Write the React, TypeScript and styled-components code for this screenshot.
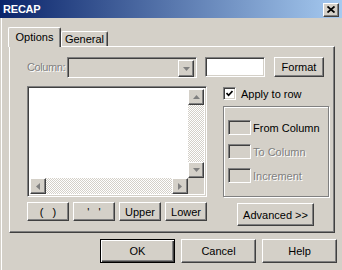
import React from 'react'
import styled, { createGlobalStyle, css } from 'styled-components'

const GlobalStyle = createGlobalStyle`
  * { box-sizing: border-box; }
  body {
    margin: 0;
    background: #d4d0c8;
    font-family: "Liberation Sans", Arial, sans-serif;
    font-size: 11px;
    color: #000;
  }
`

const raised = css`
  border: 1px solid;
  border-color: #fff #404040 #404040 #fff;
  box-shadow: inset -1px -1px #808080, inset 1px 1px #d4d0c8;
`

const sunken = css`
  border: 1px solid;
  border-color: #808080 #fff #fff #808080;
  box-shadow: inset 1px 1px #404040, inset -1px -1px #d4d0c8;
`

const Window = styled.div`
  width: 342px;
  height: 270px;
  background: #d4d0c8;
  display: flex;
  flex-direction: column;
  overflow: hidden;
`

const TitleBar = styled.div`
  height: 18px;
  flex: none;
  display: flex;
  align-items: center;
  justify-content: space-between;
  padding: 0 3px 0 3px;
  background: linear-gradient(to right, #0a246a, #a6caf0);
`

const Title = styled.span`
  color: #fff;
  font-weight: bold;
  font-size: 11px;
  letter-spacing: -0.2px;
`

const CloseButton = styled.div`
  ${raised};
  width: 16px;
  height: 14px;
  background: #d4d0c8;
  display: flex;
  align-items: center;
  justify-content: center;
  margin-top: 1px;
`

const Body = styled.div`
  flex: 1;
  margin-left: 1px;
  border-left: 1px solid #fff;
  padding: 9px 0 0 6px;
  display: flex;
  flex-direction: column;
`

const TabStrip = styled.div`
  display: flex;
  align-items: flex-end;
  height: 19px;
  position: relative;
  z-index: 1;
`

const Tab = styled.div<{ $active?: boolean; $width: number }>`
  width: ${p => p.$width}px;
  height: ${p => (p.$active ? 20 : 15)}px;
  margin-bottom: ${p => (p.$active ? -1 : 0)}px;
  background: #d4d0c8;
  border-top: 1px solid #fff;
  border-left: 1px solid #fff;
  border-right: 1px solid #404040;
  box-shadow: inset -1px 0 #808080;
  border-radius: 2px 2px 0 0;
  display: flex;
  justify-content: center;
  padding-top: ${p => (p.$active ? 3 : 1)}px;
`

const Panel = styled.div`
  margin-left: 1px;
  width: 326px;
  height: 187px;
  border: 1px solid;
  border-color: #fff #404040 #404040 #fff;
  box-shadow: inset -1px -1px #808080;
  padding: 10px 0 0 17px;
  display: flex;
  flex-direction: column;
`

const Row = styled.div`
  display: flex;
  align-items: flex-start;
`

const DisabledLabel = styled.span<{ $width?: number }>`
  color: #808080;
  text-shadow: 1px 1px 0 #fff;
  ${p => (p.$width ? `width: ${p.$width}px;` : '')}
  flex: none;
  line-height: 21px;
  letter-spacing: -0.4px;
  white-space: nowrap;
`

const Combo = styled.div`
  ${sunken};
  width: 130px;
  height: 21px;
  background: #d4d0c8;
  padding: 2px;
  display: flex;
  justify-content: flex-end;
`

const ArrowButton = styled.div<{ $w?: number; $h?: number }>`
  ${raised};
  width: ${p => p.$w ?? 16}px;
  height: ${p => p.$h ?? 16}px;
  flex: none;
  background: #d4d0c8;
  display: flex;
  align-items: center;
  justify-content: center;
`

const TextField = styled.div`
  ${sunken};
  width: 60px;
  height: 20px;
  margin-left: 8px;
  background: #fff;
`

const Button = styled.div<{ $w: number; $h: number; $ml?: number; $mt?: number; $default?: boolean }>`
  ${raised};
  width: ${p => p.$w}px;
  height: ${p => p.$h}px;
  margin-left: ${p => p.$ml ?? 0}px;
  margin-top: ${p => p.$mt ?? 0}px;
  flex: none;
  background: #d4d0c8;
  display: flex;
  align-items: center;
  justify-content: center;
  white-space: pre;
  ${p =>
    p.$default &&
    css`
      border: 1px solid #000;
      box-shadow: inset 1px 1px #fff, inset -1px -1px #404040, inset -2px -2px #808080;
    `}
`

const Columns = styled.div`
  display: flex;
  margin-top: 8px;
`

const LeftCol = styled.div`
  display: flex;
  flex-direction: column;
  width: 180px;
`

const ListBox = styled.div`
  ${sunken};
  width: 180px;
  height: 111px;
  background: #fff;
  padding: 2px;
  display: grid;
  grid-template-columns: 1fr 16px;
  grid-template-rows: 1fr 16px;
`

const VScroll = styled.div`
  grid-column: 2;
  grid-row: 1;
  display: flex;
  flex-direction: column;
`

const HScroll = styled.div`
  grid-column: 1;
  grid-row: 2;
  display: flex;
`

const Track = styled.div`
  flex: 1;
  background-image: repeating-conic-gradient(#fff 0 25%, #d4d0c8 0 50%);
  background-size: 2px 2px;
`

const Corner = styled.div`
  grid-column: 2;
  grid-row: 2;
  background: #d4d0c8;
`

const ButtonRow = styled.div`
  display: flex;
  gap: 4px;
  margin-top: 5px;
`

const RightCol = styled.div`
  display: flex;
  flex-direction: column;
  margin-left: 16px;
`

const CheckRow = styled.div`
  display: flex;
  align-items: center;
  height: 13px;
  margin-top: 1px;
`

const CheckBox = styled.div`
  ${sunken};
  width: 13px;
  height: 13px;
  background: #fff;
  display: flex;
  align-items: center;
  justify-content: center;
`

const CheckText = styled.span`
  margin-left: 5px;
`

const GroupBox = styled.div`
  width: 106px;
  height: 91px;
  margin-top: 6px;
  border: 1px solid #808080;
  box-shadow: inset 1px 1px #fff, 1px 1px #fff;
  padding: 13px 0 0 4px;
  display: flex;
  flex-direction: column;
  gap: 9px;
`

const GroupRow = styled.div`
  display: flex;
  align-items: center;
  height: 15px;
`

const EmptyBox = styled.div`
  ${sunken};
  width: 23px;
  height: 15px;
  background: #d4d0c8;
  flex: none;
`

const GroupLabel = styled.span<{ $disabled?: boolean }>`
  margin-left: 2px;
  white-space: nowrap;
  ${p =>
    p.$disabled &&
    css`
      color: #808080;
      text-shadow: 1px 1px 0 #fff;
    `}
`

const Footer = styled.div`
  display: flex;
  justify-content: flex-end;
  gap: 6px;
  margin-top: 6px;
  padding-right: 5px;
`

type Dir = 'up' | 'down' | 'left' | 'right'

const Arrow = ({ dir }: { dir: Dir }) => {
  const pts: Record<Dir, string> = {
    up: '3.5,0 7,4 0,4',
    down: '0,0 7,0 3.5,4',
    left: '4,0 4,7 0,3.5',
    right: '0,0 0,7 4,3.5',
  }
  const vertical = dir === 'up' || dir === 'down'
  return (
    <svg width={vertical ? 7 : 4} height={vertical ? 4 : 7} viewBox={vertical ? '0 0 7 4' : '0 0 4 7'}>
      <polygon points={pts[dir]} fill="#808080" />
    </svg>
  )
}

export default function App () {
  return (
    <>
      <GlobalStyle />
      <Window>
        <TitleBar>
          <Title>RECAP</Title>
          <CloseButton>
            <svg width="8" height="7" viewBox="0 0 8 7">
              <path d="M0.5 0.5 L7.5 6.5 M7.5 0.5 L0.5 6.5" stroke="#000" strokeWidth="1.8" />
            </svg>
          </CloseButton>
        </TitleBar>
        <Body>
          <TabStrip>
            <Tab $active $width={53}>Options</Tab>
            <Tab $width={47}>General</Tab>
          </TabStrip>
          <Panel>
            <Row>
              <DisabledLabel $width={40}>Column:</DisabledLabel>
              <Combo>
                <ArrowButton $w={16} $h={17}>
                  <Arrow dir="down" />
                </ArrowButton>
              </Combo>
              <TextField />
              <Button $w={50} $h={20} $ml={9}>Format</Button>
            </Row>
            <Columns>
              <LeftCol>
                <ListBox>
                  <div />
                  <VScroll>
                    <ArrowButton><Arrow dir="up" /></ArrowButton>
                    <Track />
                    <ArrowButton><Arrow dir="down" /></ArrowButton>
                  </VScroll>
                  <HScroll>
                    <ArrowButton><Arrow dir="left" /></ArrowButton>
                    <Track />
                    <ArrowButton><Arrow dir="right" /></ArrowButton>
                  </HScroll>
                  <Corner />
                </ListBox>
                <ButtonRow>
                  <Button $w={42} $h={19}>(   )</Button>
                  <Button $w={42} $h={19}>'   '</Button>
                  <Button $w={42} $h={19}>Upper</Button>
                  <Button $w={42} $h={19}>Lower</Button>
                </ButtonRow>
              </LeftCol>
              <RightCol>
                <CheckRow>
                  <CheckBox>
                    <svg width="7" height="7" viewBox="0 0 7 7">
                      <path d="M0.5 3 L2.6 5.3 L6.5 1" stroke="#000" strokeWidth="1.7" fill="none" />
                    </svg>
                  </CheckBox>
                  <CheckText>Apply to row</CheckText>
                </CheckRow>
                <GroupBox>
                  <GroupRow>
                    <EmptyBox />
                    <GroupLabel>From Column</GroupLabel>
                  </GroupRow>
                  <GroupRow>
                    <EmptyBox />
                    <GroupLabel $disabled>To Column</GroupLabel>
                  </GroupRow>
                  <GroupRow>
                    <EmptyBox />
                    <GroupLabel $disabled>Increment</GroupLabel>
                  </GroupRow>
                </GroupBox>
                <Button $w={77} $h={23} $ml={14} $mt={6}>Advanced &gt;&gt;</Button>
              </RightCol>
            </Columns>
          </Panel>
          <Footer>
            <Button $w={75} $h={24} $default>OK</Button>
            <Button $w={75} $h={24}>Cancel</Button>
            <Button $w={75} $h={24}>Help</Button>
          </Footer>
        </Body>
      </Window>
    </>
  )
}
